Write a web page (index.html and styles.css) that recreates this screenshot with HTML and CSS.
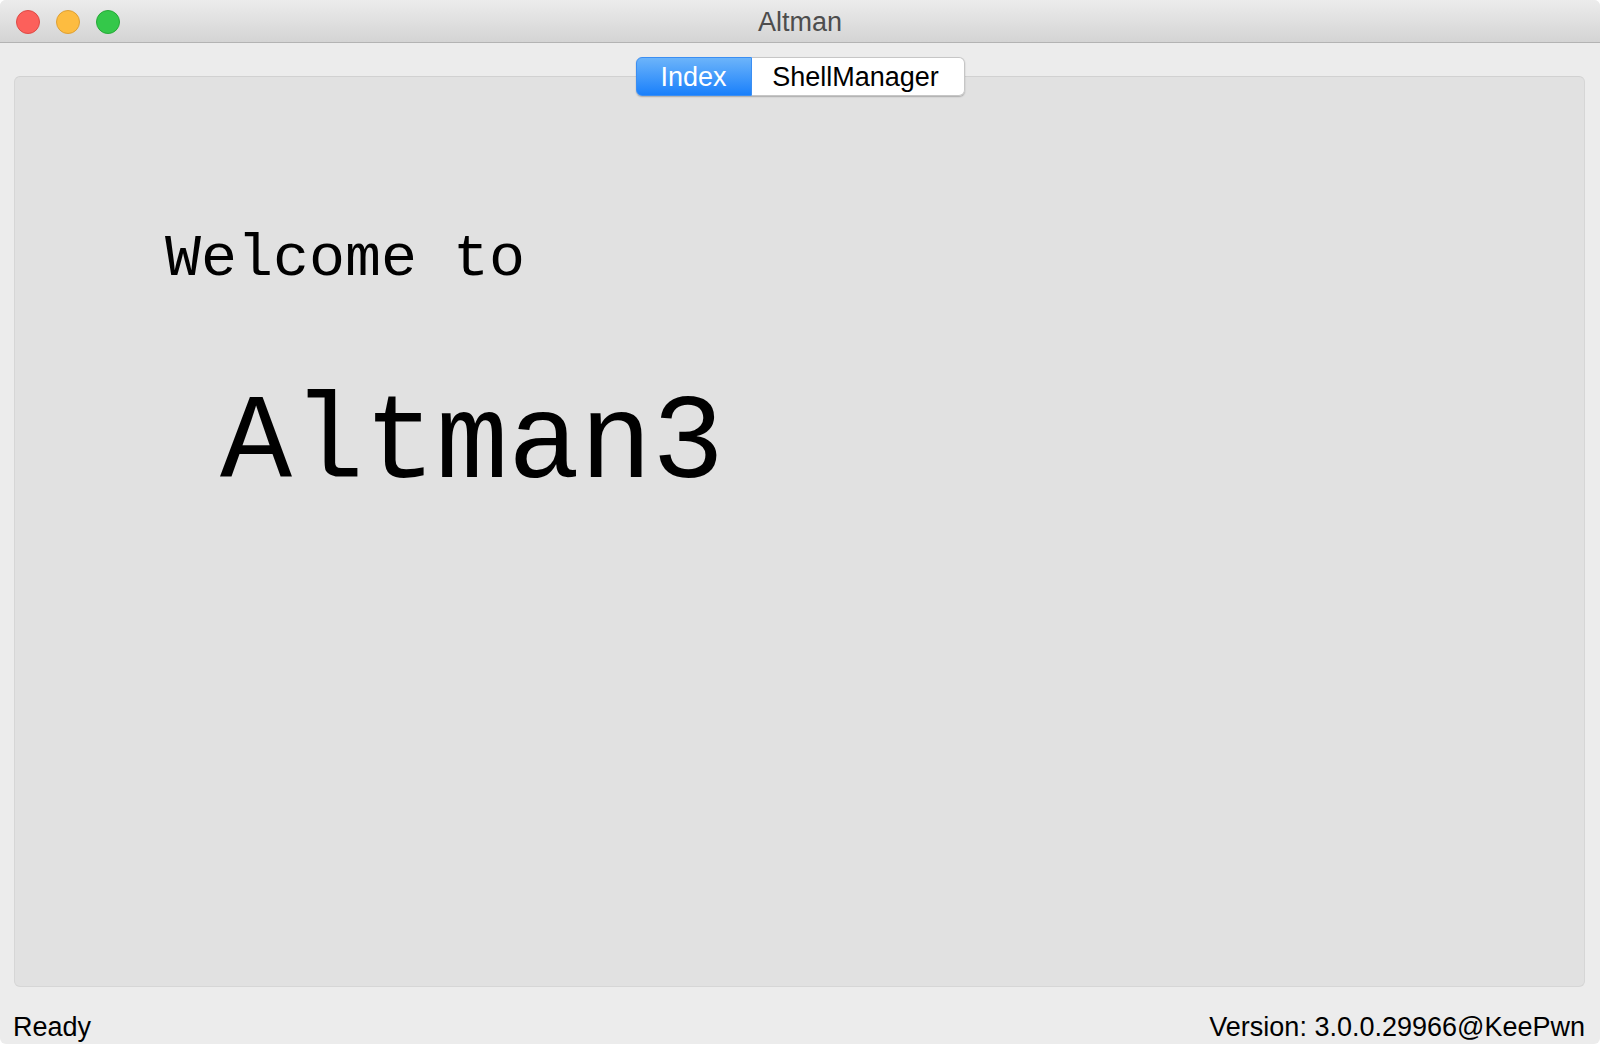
FILE: index.html
```html
<!DOCTYPE html>
<html>
<head>
<meta charset="utf-8">
<title>Altman</title>
<link rel="stylesheet" href="styles.css">
</head>
<body>
<div class="window">
  <div class="titlebar">
    <div class="lights">
      <span class="light red"></span>
      <span class="light yellow"></span>
      <span class="light green"></span>
    </div>
    <div class="title">Altman</div>
    <div class="spacer"></div>
  </div>
  <div class="tabwidget">
    <div class="tabs">
      <div class="tab active">Index</div>
      <div class="tab">ShellManager</div>
    </div>
    <div class="panel">
      <div class="welcome">Welcome to</div>
      <div class="brand">Altman3</div>
    </div>
  </div>
  <div class="statusbar">
    <span class="status-left">Ready</span>
    <span class="status-right">Version: 3.0.0.29966@KeePwn</span>
  </div>
</div>
</body>
</html>
```
FILE: styles.css
```css
html, body {
  margin: 0;
  padding: 0;
  background: #ffffff;
}
.window {
  width: 1600px;
  height: 1044px;
  background: #ececec;
  border-radius: 6px;
  overflow: hidden;
  display: flex;
  flex-direction: column;
  font-family: "Liberation Sans", Arial, sans-serif;
}
.titlebar {
  height: 42px;
  flex: none;
  border-bottom: 1px solid #b3b3b3;
  background: linear-gradient(#ececec, #d4d4d4);
  display: grid;
  grid-template-columns: 1fr auto 1fr;
  align-items: start;
}
.lights {
  display: flex;
  gap: 16px;
  padding: 10px 0 0 16px;
}
.light {
  width: 24px;
  height: 24px;
  border-radius: 50%;
  box-sizing: border-box;
}
.red { background: #fc605b; border: 1px solid #de4a45; }
.yellow { background: #fdbc40; border: 1px solid #dea034; }
.green { background: #34c84a; border: 1px solid #26a937; }
.title {
  font-size: 27px;
  line-height: 40px;
  padding-top: 2px;
  color: #4d4d4d;
  text-align: center;
}
.tabwidget {
  flex: 1;
  display: flex;
  flex-direction: column;
  padding: 14px 15px 0 14px;
}
.tabs {
  position: relative;
  z-index: 1;
  align-self: center;
  display: flex;
  height: 39px;
  margin-bottom: -20px;
  margin-left: 1px;
  border-radius: 6px;
  box-shadow: 0 1px 1.5px rgba(0,0,0,0.25);
}
.tab {
  box-sizing: border-box;
  height: 39px;
  font-size: 27px;
  line-height: 36px;
  padding-top: 1px;
  text-align: center;
  color: #000;
  background: #ffffff;
  border: 1px solid #c6c6c6;
  border-left: none;
  width: 213px;
  border-radius: 0 6px 6px 0;
  padding-right: 4px;
}
.tab.active {
  width: 116px;
  color: #ffffff;
  background: linear-gradient(#6cb4fa, #1a80fb);
  border: 1px solid #3b8ef2;
  border-radius: 6px 0 0 6px;
  padding-right: 0;
}
.panel {
  flex: 1;
  background: #e1e1e1;
  border: 1px solid #d6d6d6;
  border-top-color: #d1d1d1;
  border-radius: 6px;
  padding: 152px 0 0 150px;
  display: flex;
  flex-direction: column;
  align-items: flex-start;
  font-family: "Courier New", "Liberation Mono", monospace;
  color: #000;
}
.welcome {
  font-size: 60px;
  line-height: 60px;
  white-space: pre;
}
.brand {
  font-size: 120px;
  line-height: 120px;
  margin-top: 96px;
  margin-left: 55px;
}
.statusbar {
  flex: none;
  height: 57px;
  box-sizing: border-box;
  padding: 25px 15px 0 13px;
  display: flex;
  justify-content: space-between;
  align-items: flex-start;
  font-size: 27px;
  line-height: 30px;
  color: #000;
}
```
